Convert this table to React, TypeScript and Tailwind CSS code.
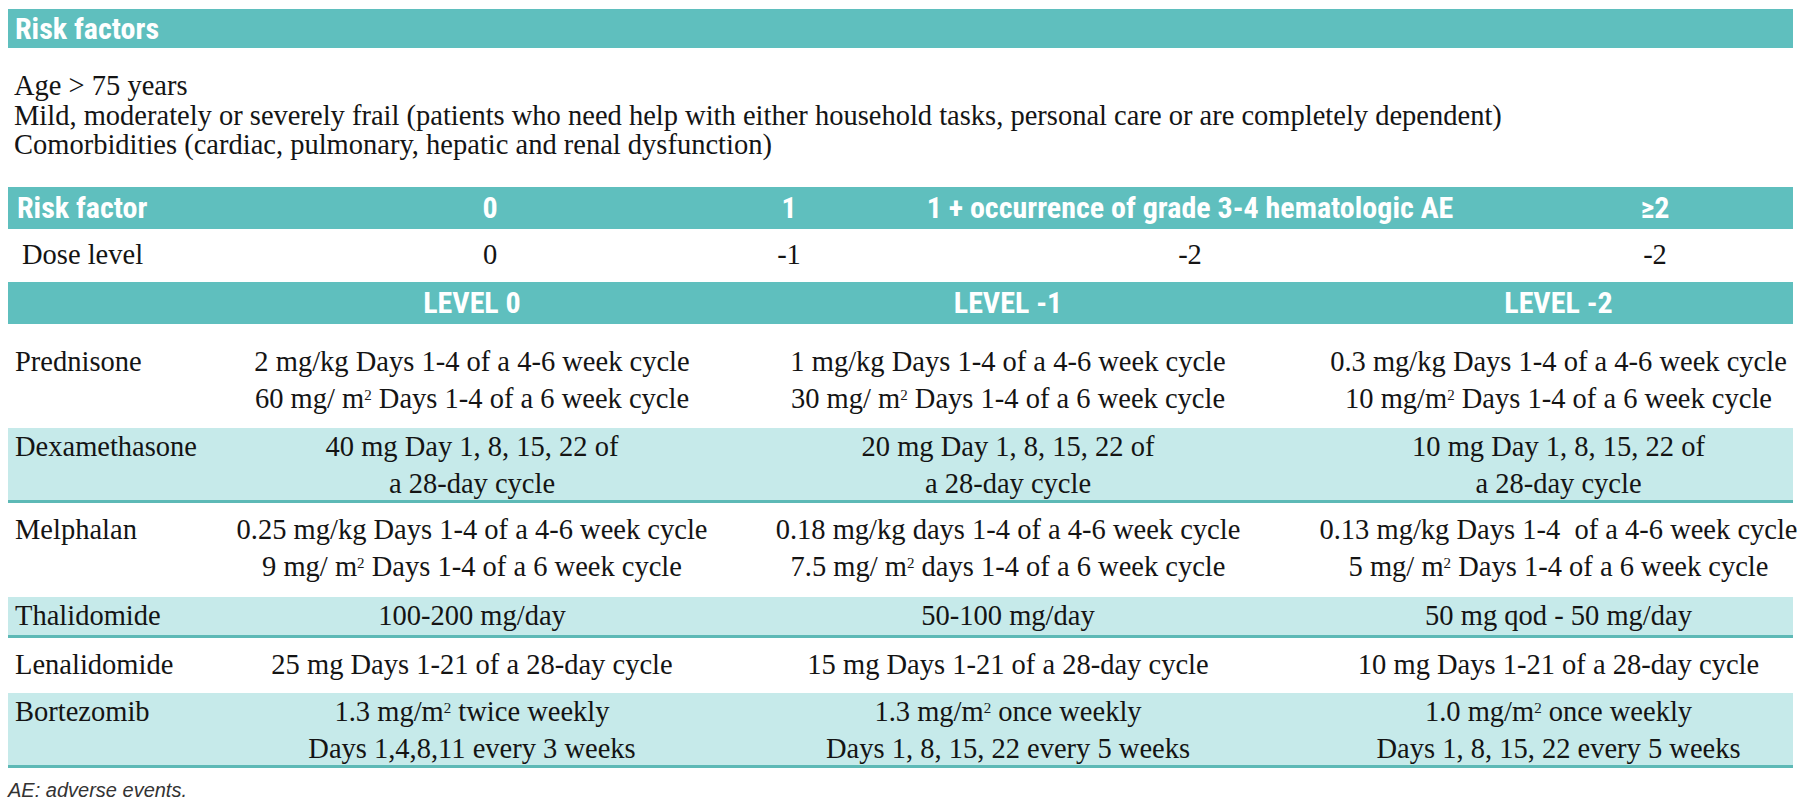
import React from 'react';

type Line = React.ReactNode;

interface DrugRow {
  name: string;
  cells: Line[][];
  shaded: boolean;
  rowClass: string;
}

const M2 = () => <sup className="text-[15px]">2</sup>;

const riskFactors = [
  'Age > 75 years',
  'Mild, moderately or severely frail (patients who need help with either household tasks, personal care or are completely dependent)',
  'Comorbidities (cardiac, pulmonary, hepatic and renal dysfunction)',
];

const drugRows: DrugRow[] = [
  {
    name: 'Prednisone',
    shaded: false,
    rowClass: 'h-[104px] pt-[19px]',
    cells: [
      ['2 mg/kg Days 1-4 of a 4-6 week cycle', <>60 mg/ m<M2 /> Days 1-4 of a 6 week cycle</>],
      ['1 mg/kg Days 1-4 of a 4-6 week cycle', <>30 mg/ m<M2 /> Days 1-4 of a 6 week cycle</>],
      ['0.3 mg/kg Days 1-4 of a 4-6 week cycle', <>10 mg/m<M2 /> Days 1-4 of a 6 week cycle</>],
    ],
  },
  {
    name: 'Dexamethasone',
    shaded: true,
    rowClass: 'h-[75px]',
    cells: [
      ['40 mg Day 1, 8, 15, 22 of', 'a 28-day cycle'],
      ['20 mg Day 1, 8, 15, 22 of', 'a 28-day cycle'],
      ['10 mg Day 1, 8, 15, 22 of', 'a 28-day cycle'],
    ],
  },
  {
    name: 'Melphalan',
    shaded: false,
    rowClass: 'h-[94px] pt-[8px]',
    cells: [
      ['0.25 mg/kg Days 1-4 of a 4-6 week cycle', <>9 mg/ m<M2 /> Days 1-4 of a 6 week cycle</>],
      ['0.18 mg/kg days 1-4 of a 4-6 week cycle', <>7.5 mg/ m<M2 /> days 1-4 of a 6 week cycle</>],
      ['0.13 mg/kg Days 1-4 \u00a0of a 4-6 week cycle', <>5 mg/ m<M2 /> Days 1-4 of a 6 week cycle</>],
    ],
  },
  {
    name: 'Thalidomide',
    shaded: true,
    rowClass: 'h-[41px]',
    cells: [['100-200 mg/day'], ['50-100 mg/day'], ['50 mg qod - 50 mg/day']],
  },
  {
    name: 'Lenalidomide',
    shaded: false,
    rowClass: 'h-[55px] pt-[8px]',
    cells: [
      ['25 mg Days 1-21 of a 28-day cycle'],
      ['15 mg Days 1-21 of a 28-day cycle'],
      ['10 mg Days 1-21 of a 28-day cycle'],
    ],
  },
  {
    name: 'Bortezomib',
    shaded: true,
    rowClass: 'h-[75px]',
    cells: [
      [<>1.3 mg/m<M2 /> twice weekly</>, 'Days 1,4,8,11 every 3 weeks'],
      [<>1.3 mg/m<M2 /> once weekly</>, 'Days 1, 8, 15, 22 every 5 weeks'],
      [<>1.0 mg/m<M2 /> once weekly</>, 'Days 1, 8, 15, 22 every 5 weeks'],
    ],
  },
];

// column widths taken from the printed table
const riskCols = 'grid grid-cols-[257px_450px_148px_654px_276px]';
const levelCols = 'grid grid-cols-[244px_440px_632px_469px]';
const headFont = "font-['Roboto_Condensed','Open_Sans_Condensed',sans-serif] font-bold text-white text-[30px]";

export default function App() {
  return (
    <div className="min-h-screen bg-white pl-[8px] pr-[7px] pt-[9px] font-['Liberation_Serif',serif] text-[28.5px] text-[#141414]">
      {/* Risk factors */}
      <div className={`h-[39px] flex items-center pl-[7px] bg-[#5fbfbe] leading-none ${headFont}`}>
        Risk factors
      </div>
      <div className="mt-[23px] pl-[6px] leading-[29.5px]">
        {riskFactors.map((r) => (
          <div key={r} className="whitespace-nowrap">{r}</div>
        ))}
      </div>

      {/* Risk factor -> dose level */}
      <div className={`mt-[27px] h-[42px] items-center bg-[#5fbfbe] leading-none ${riskCols} ${headFont}`}>
        <div className="pl-[9px]">Risk factor</div>
        <div className="text-center">0</div>
        <div className="text-center">1</div>
        <div className="text-center whitespace-nowrap">1 + occurrence of grade 3-4 hematologic AE</div>
        <div className="text-center">≥2</div>
      </div>
      <div className={`h-[53px] items-center ${riskCols}`}>
        <div className="pl-[14px]">Dose level</div>
        <div className="text-center">0</div>
        <div className="text-center">-1</div>
        <div className="text-center">-2</div>
        <div className="text-center">-2</div>
      </div>

      {/* Drug dose levels */}
      <div className={`h-[42px] items-center bg-[#5fbfbe] leading-none ${levelCols} ${headFont}`}>
        <div />
        <div className="text-center">LEVEL 0</div>
        <div className="text-center">LEVEL -1</div>
        <div className="text-center">LEVEL -2</div>
      </div>
      {drugRows.map((row) => (
        <div
          key={row.name}
          className={`${levelCols} items-start leading-[37px] ${row.rowClass} ${
            row.shaded ? 'bg-[#c6eaea] border-b-[3px] border-[#5db9b6]' : 'bg-white'
          }`}
        >
          <div className="pl-[7px]">{row.name}</div>
          {row.cells.map((lines, i) => (
            <div key={i} className="flex flex-col items-center">
              {lines.map((l, j) => (
                <div key={j} className="whitespace-nowrap">{l}</div>
              ))}
            </div>
          ))}
        </div>
      ))}

      <div className="mt-[10px] font-['Liberation_Sans',sans-serif] italic text-[20px] leading-[24px] text-[#333]">
        AE: adverse events.
      </div>
    </div>
  );
}
